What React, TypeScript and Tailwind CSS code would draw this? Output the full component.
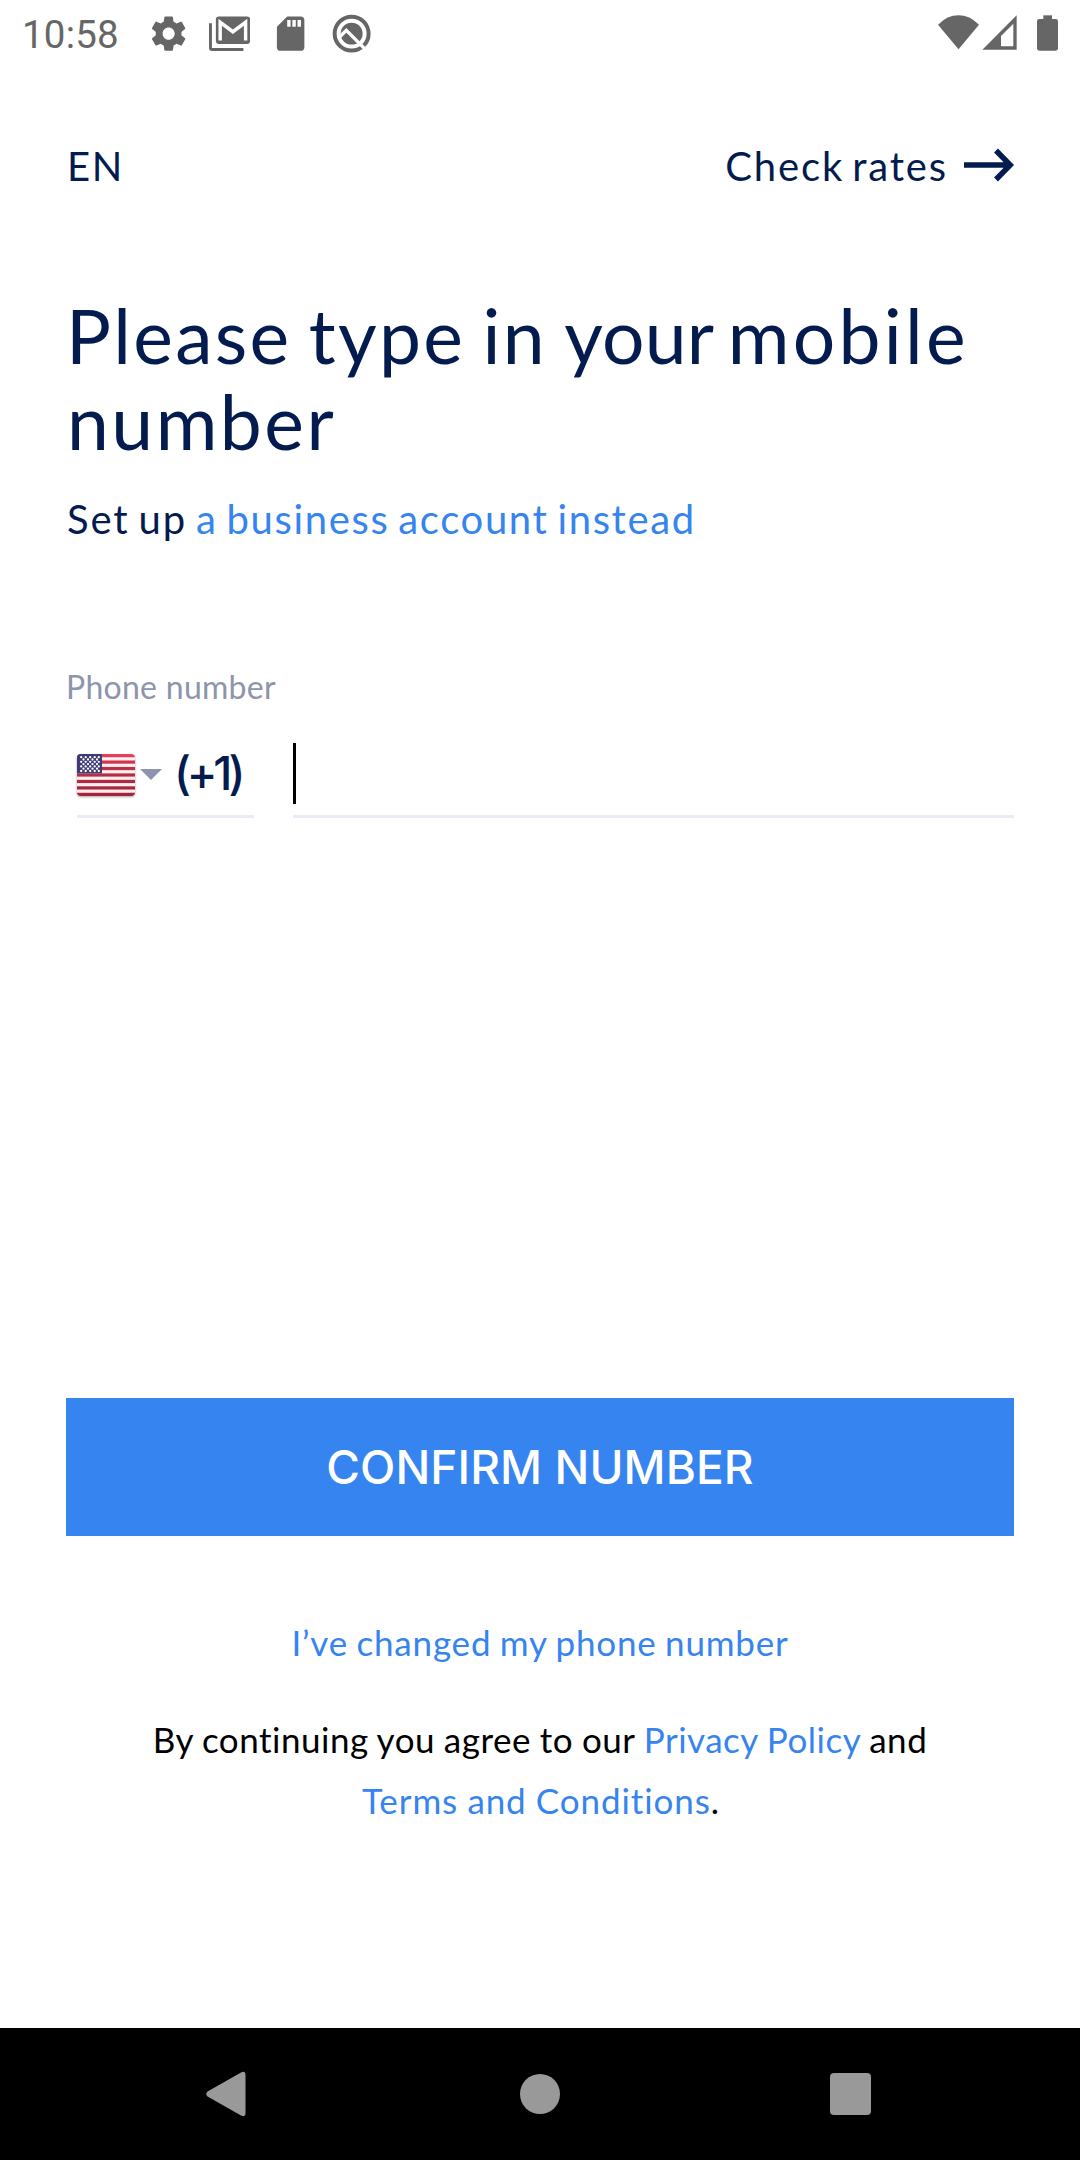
import React from "react";

const STRIPES = [0, 1, 2, 3, 4, 5];
const STAR_ROWS = [0, 1, 2, 3, 4, 5, 6];

function StatusBar() {
  return (
    <div className="flex h-[66px] items-start justify-between pr-[22px] pl-[22px] text-[#666666]">
      <div className="flex">
        <span className="mt-[12px] w-[126px] font-[Roboto,sans-serif] text-[38.5px] leading-[46px] tracking-[0.19px]">
          10:58
        </span>
        <div className="mt-[12.5px] flex gap-[19.7px]">
          <svg className="size-[41.25px]" viewBox="0 0 24 24" fill="currentColor">
            <path d="M19.43 12.98c.04-.32.07-.64.07-.98s-.03-.66-.07-.98l2.11-1.65c.19-.15.24-.42.12-.64l-2-3.46c-.12-.22-.39-.3-.61-.22l-2.49 1c-.52-.4-1.08-.73-1.69-.98l-.38-2.65C14.46 2.18 14.25 2 14 2h-4c-.25 0-.46.18-.49.42l-.38 2.65c-.61.25-1.17.59-1.69.98l-2.49-1c-.23-.09-.49 0-.61.22l-2 3.46c-.13.22-.07.49.12.64l2.11 1.65c-.04.32-.07.65-.07.98s.03.66.07.98l-2.11 1.65c-.19.15-.24.42-.12.64l2 3.46c.12.22.39.3.61.22l2.49-1c.52.4 1.08.73 1.69.98l.38 2.65c.03.24.24.42.49.42h4c.25 0 .46-.18.49-.42l.38-2.65c.61-.25 1.17-.59 1.69-.98l2.49 1c.23.09.49 0 .61-.22l2-3.46c.12-.22.07-.49-.12-.64l-2.11-1.65zM12 15.5c-1.93 0-3.5-1.57-3.5-3.5s1.57-3.5 3.5-3.5 3.5 1.57 3.5 3.5-1.57 3.5-3.5 3.5z" />
          </svg>
          <svg className="size-[41.25px]" viewBox="0 0 24 24" fill="none">
            <rect x="4" y="2" width="20" height="16" rx="1.8" fill="currentColor" />
            <path d="M.85 6v14.2q0 1 1 1H20" stroke="currentColor" strokeWidth="1.7" />
            <path d="M6.5 16V5.4L13.9 10.9 21.3 5.4V16" stroke="#fff" strokeWidth="2" />
          </svg>
          <svg className="size-[41.25px]" viewBox="0 0 24 24" fill="currentColor">
            <path d="M18 2h-8L4.02 8 4 20c0 1.1.9 2 2 2h12c1.1 0 2-.9 2-2V4c0-1.1-.9-2-2-2zm-6 6h-2V4h2v4zm3 0h-2V4h2v4zm3 0h-2V4h2v4z" />
          </svg>
          <svg className="size-[41.25px]" viewBox="0 0 124 124" fill="none">
            <circle cx="62" cy="62" r="51" stroke="currentColor" strokeWidth="12" />
            <circle cx="62" cy="62" r="33" fill="currentColor" />
            <path d="M22 76 46 52 108 114" stroke="#fff" strokeWidth="10" />
          </svg>
        </div>
      </div>
      <div className="mt-[15px] flex">
        <svg className="h-[35px] w-[41px]" viewBox="0 0 123 105" fill="currentColor">
          <path d="M61.500 103 0 29Q28 1 61.500 1T123 29z" />
        </svg>
        <svg className="ml-[3px] h-[35px] w-[35px]" viewBox="0 0 105 105" fill="currentColor" fillRule="evenodd">
          <path d="M1 104 104 1V104zM57 63V94H94V26z" />
        </svg>
        <svg className="ml-[20px] h-[36px] w-[21px]" viewBox="0 0 63 108" fill="currentColor">
          <rect x="19" y="1" width="26" height="16" />
          <rect x="0" y="12" width="63" height="95" rx="7" />
        </svg>
      </div>
    </div>
  );
}

function UsFlag() {
  return (
    <svg className="h-[42px] w-[58px] drop-shadow-[0_1px_1px_rgba(0,0,0,0.35)]" viewBox="0 0 58 42">
      <defs>
        <clipPath id="flag-shape">
          <rect width="58" height="42" rx="4" />
        </clipPath>
        <linearGradient id="flag-shade" gradientUnits="userSpaceOnUse" x1="0" y1="0" x2="0" y2="42">
          <stop offset="0" stopColor="#e8435a" />
          <stop offset="0.3" stopColor="#bd3049" />
          <stop offset="1" stopColor="#a3233c" />
        </linearGradient>
      </defs>
      <g clipPath="url(#flag-shape)">
        <rect width="58" height="42" fill="url(#flag-shade)" />
        {STRIPES.map((i) => (
          <rect key={i} y={3.23 + i * 6.46} width="58" height="3.23" fill="#fdeef0" />
        ))}
        <rect width="25" height="19.4" fill="#3c3b74" />
        {STAR_ROWS.map((r) =>
          (r % 2 ? [6.5, 11, 15.5, 20] : [4.2, 8.7, 13.2, 17.7, 21.8]).map((x) => (
            <circle key={`${r}-${x}`} cx={x} cy={3.2 + r * 2.3} r="1.15" fill="#fff" />
          )),
        )}
      </g>
    </svg>
  );
}

function PhoneField() {
  return (
    <div className="flex h-[78px] items-stretch">
      <div className="ml-[11px] flex w-[177px] items-center border-b-[3px] border-[#e9ebf5] pb-[6px]">
        <UsFlag />
        <svg className="ml-[5px] h-[11px] w-[22px]" viewBox="0 0 22 11" fill="#8d94ab">
          <path d="M0 0H22L11 11z" />
        </svg>
        <span className="ml-[12px] pb-[4px] font-[Inter,sans-serif] text-[46px] font-medium leading-[56px] tracking-[-4.2px]">
          (+1)
        </span>
      </div>
      <div className="ml-[39px] flex-1 border-b-[3px] border-[#e9ebf5] pt-[3px]">
        <div className="h-[61px] w-[3px] bg-black" />
      </div>
    </div>
  );
}

function NavigationBar() {
  return (
    <div className="flex h-[132px] items-center bg-black pl-[206px]">
      <svg className="h-[46px] w-[40px]" viewBox="0 0 40 46" fill="#999999">
        <path d="M1.500 20.500 35 1.400Q39.500 -.500 39.500 4V42Q39.500 46.500 35 44.600L1.500 25.500Q-1 23 1.500 20.500z" />
      </svg>
      <div className="ml-[274px] size-10 rounded-full bg-[#999999]" />
      <div className="ml-[270px] h-[42px] w-[41px] rounded-[4px] bg-[#999999]" />
    </div>
  );
}

export default function App() {
  return (
    <div className="flex h-[2160px] w-[1080px] flex-col overflow-hidden bg-white font-[Lato,sans-serif] text-[#031b4e]">
      <StatusBar />
      <main className="flex flex-1 flex-col px-[66px]">
        <header className="mt-[75px] flex h-12 items-center justify-between text-[40px] leading-[48px]">
          <span className="pt-px pl-[1px] tracking-[1.6px]">EN</span>
          <div className="flex items-center">
            <span className="pt-px tracking-[1.85px] [word-spacing:-4px]">Check rates</span>
            <svg className="ml-[16px] h-[34px] w-[50px]" viewBox="0 0 50 34" fill="none" stroke="currentColor" strokeWidth="5.5">
              <path d="M0 17H46M32 2.500 46.200 17 32 31.500" />
            </svg>
          </div>
        </header>

        <h1 className="mt-[103px] text-[75px] leading-[86px]">
          <span className="block [word-spacing:-4.4px]">
            <span className="tracking-[2.35px]">Please type in </span>
            <span className="tracking-[0.2px]">your </span>
            <span className="tracking-[3.3px]">mobile</span>
          </span>
          <span className="block pl-px tracking-[2.5px]">number</span>
        </h1>
        <p className="mt-[31px] pl-px text-[40px] leading-[48px] tracking-[1.85px] [word-spacing:-3px]">
          Set up <span className="tracking-[1.65px] text-[#3684f0]">a business account instead</span>
        </p>

        <label className="mt-[124px] text-[32px] leading-[40px] tracking-[0.28px] text-[#8d94ab]">Phone number</label>
        <div className="mt-[33px]">
          <PhoneField />
        </div>

        <button className="mt-[580px] h-[138px] bg-[#3684f0] font-[Inter,sans-serif] text-[46px] font-medium tracking-[0.1px] text-white">
          CONFIRM NUMBER
        </button>

        <a className="mt-[85px] text-center text-[35px] leading-[42px] tracking-[0.8px] text-[#3684f0] [word-spacing:-1.2px]">
          I’ve changed my phone number
        </a>
        <p className="mt-[46px] text-center text-[35px] leading-[61px] tracking-[0.5px] text-black [word-spacing:-0.6px]">
          By continuing you agree to our <span className="text-[#3684f0]">Privacy Policy</span> and
          <br />
          <span className="pl-[2px] tracking-[0.9px]">
            <span className="text-[#3684f0]">Terms and Conditions</span>.
          </span>
        </p>
      </main>
      <NavigationBar />
    </div>
  );
}
